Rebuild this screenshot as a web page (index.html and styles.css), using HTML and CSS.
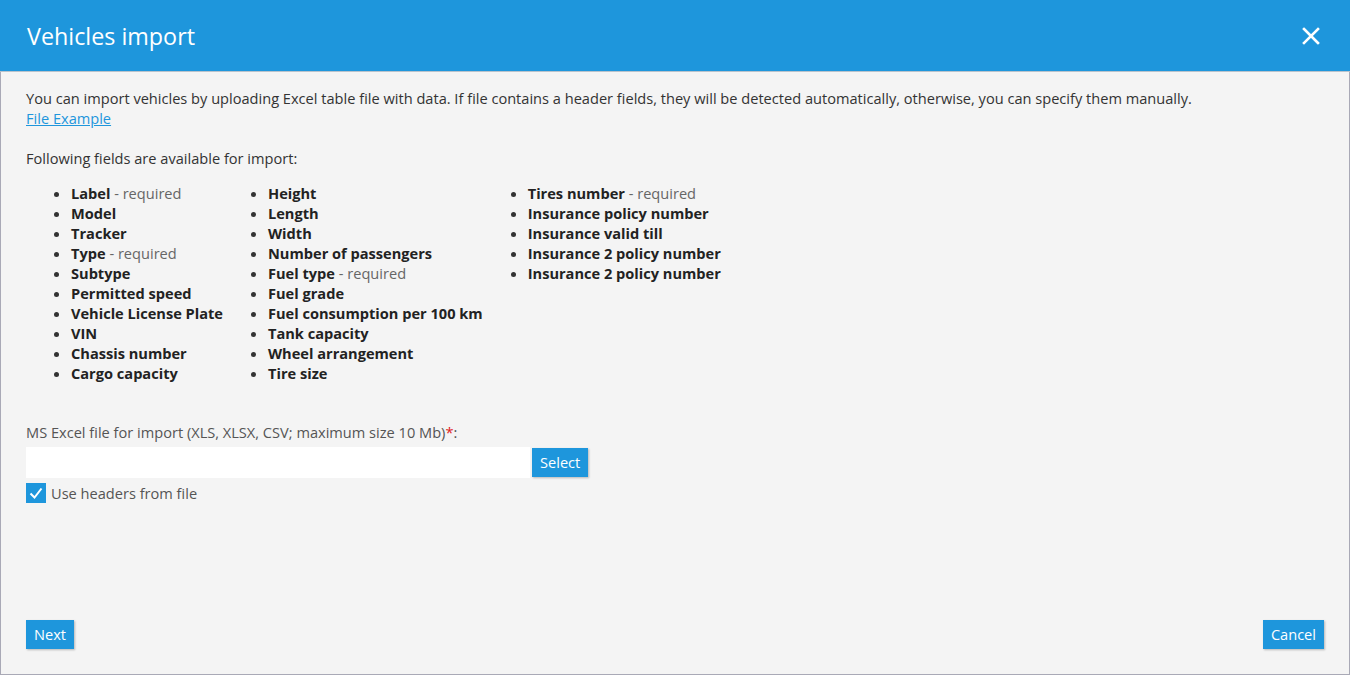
FILE: index.html
```html
<!DOCTYPE html>
<html>
<head>
<meta charset="utf-8">
<link rel="stylesheet" href="styles.css">
</head>
<body>
<div class="dialog">
  <div class="header">
    <h1 class="title">Vehicles import</h1>
    <button class="close" aria-label="Close">
      <svg width="18" height="18" viewBox="0 0 18 18"><path d="M2 2L16 16M16 2L2 16" stroke="#fff" stroke-width="2.6" stroke-linecap="square"/></svg>
    </button>
  </div>
  <div class="content">
    <p class="intro">You can import vehicles by uploading Excel table file with data. If file contains a header fields, they will be detected automatically, otherwise, you can specify them manually.<br><a href="#" class="link">File Example</a></p>
    <p class="lead">Following fields are available for import:</p>
    <div class="fields">
      <ul class="col">
        <li><b>Label</b> <span class="req">- required</span></li>
        <li><b>Model</b></li>
        <li><b>Tracker</b></li>
        <li><b>Type</b> <span class="req">- required</span></li>
        <li><b>Subtype</b></li>
        <li><b>Permitted speed</b></li>
        <li><b>Vehicle License Plate</b></li>
        <li><b>VIN</b></li>
        <li><b>Chassis number</b></li>
        <li><b>Cargo capacity</b></li>
      </ul>
      <ul class="col">
        <li><b>Height</b></li>
        <li><b>Length</b></li>
        <li><b>Width</b></li>
        <li><b>Number of passengers</b></li>
        <li><b>Fuel type</b> <span class="req">- required</span></li>
        <li><b>Fuel grade</b></li>
        <li><b>Fuel consumption per 100 km</b></li>
        <li><b>Tank capacity</b></li>
        <li><b>Wheel arrangement</b></li>
        <li><b>Tire size</b></li>
      </ul>
      <ul class="col">
        <li><b>Tires number</b> <span class="req">- required</span></li>
        <li><b>Insurance policy number</b></li>
        <li><b>Insurance valid till</b></li>
        <li><b>Insurance 2 policy number</b></li>
        <li><b>Insurance 2 policy number</b></li>
      </ul>
    </div>
    <div class="file-field">
      <label class="file-label">MS Excel file for import (XLS, XLSX, CSV; maximum size 10 Mb)<span class="star">*</span>:</label>
      <div class="file-row">
        <div class="file-input"></div>
        <button class="btn">Select</button>
      </div>
      <div class="check-row">
        <span class="checkbox">
          <svg width="20" height="20" viewBox="0 0 20 20"><path d="M4.5 10.5L8.5 14.5L15.5 5.5" fill="none" stroke="#fff" stroke-width="2"/></svg>
        </span>
        <span class="check-label">Use headers from file</span>
      </div>
    </div>
  </div>
  <div class="footer">
    <button class="btn">Next</button>
    <button class="btn">Cancel</button>
  </div>
</div>
</body>
</html>
```

FILE: styles.css
```css
html, body {
  margin: 0;
  padding: 0;
}
body {
  font-family: "Open Sans", "Noto Sans", sans-serif;
  font-size: 14.6px;
  line-height: 20px;
  color: #333;
  background: #f4f4f4;
}
.dialog {
  box-sizing: border-box;
  width: 1350px;
  height: 675px;
  display: flex;
  flex-direction: column;
  background: #f4f4f4;
  border-left: 1px solid #a9a9b6;
  border-right: 1px solid #a9a9b6;
  border-bottom: 1px solid #a9a9b6;
}
.header {
  height: 72px;
  box-sizing: border-box;
  margin: 0 -1px;
  background: #1e96dc;
  border-bottom: 1px solid #b9c3cc;
  display: flex;
  align-items: center;
  justify-content: space-between;
  padding: 0 30px 0 27px;
}
.title {
  margin: 0;
  font-weight: 400;
  font-size: 23.3px;
  color: #fff;
  line-height: 30px;
  padding-top: 1px;
}
.close {
  background: none;
  border: 0;
  padding: 0;
  width: 18px;
  height: 18px;
  display: flex;
  cursor: pointer;
}
.content {
  flex: 1;
  padding: 16px 25px 0 25px;
}
.intro {
  margin: 0;
}
.link {
  color: #1e96dc;
  text-decoration: underline;
}
.lead {
  margin: 20px 0 0;
}
.fields {
  display: flex;
  margin-top: 15px;
}
.col {
  margin: 0;
  padding-left: 45px;
  list-style: disc;
}
.col b {
  font-weight: 700;
  color: #222;
}
.req {
  color: #666;
}
.file-field {
  margin-top: 39px;
}
.file-label {
  display: block;
  color: #555;
}
.star {
  color: #e02020;
}
.file-row {
  display: flex;
  align-items: flex-start;
  margin-top: 5px;
}
.file-input {
  width: 504px;
  height: 31px;
  background: #fff;
}
.btn {
  font-family: "Open Sans", "Noto Sans", sans-serif;
  font-size: 14.6px;
  line-height: 20px;
  color: #fff;
  background: #1e96dc;
  border: 0;
  padding: 4px 8px 5px;
  box-shadow: 1px 1px 2px rgba(0,0,0,0.25);
  cursor: pointer;
}
.file-row .btn {
  margin-left: 2px;
  margin-top: 1px;
  padding: 4px 8px 5px;
}
.check-row {
  display: flex;
  align-items: center;
  margin-top: 5px;
}
.checkbox {
  width: 20px;
  height: 20px;
  background: #1e96dc;
  display: flex;
}
.check-label {
  margin-left: 5px;
  color: #555;
}
.footer {
  display: flex;
  justify-content: space-between;
  padding: 0 25px 25px 25px;
}
```
